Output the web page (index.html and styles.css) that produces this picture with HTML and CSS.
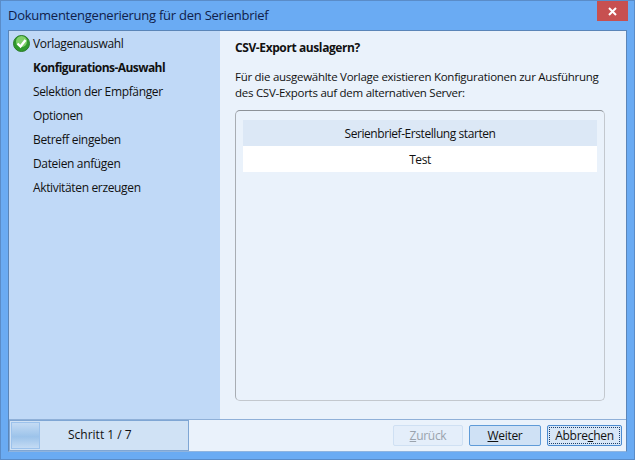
FILE: index.html
```html
<!DOCTYPE html>
<html lang="de">
<head>
	<meta charset="utf-8">
	<title>Dokumentengenerierung für den Serienbrief</title>
	<link rel="stylesheet" href="styles.css">
</head>
<body>
	<div class="window">
		<div class="titlebar">
			<span class="title">Dokumentengenerierung für den Serienbrief</span>
			<div class="close">
				<svg width="9" height="9" viewBox="0 0 9 9"><path d="M1 1l7 7M8 1l-7 7" stroke="#fff" stroke-width="2" fill="none"/></svg>
			</div>
		</div>
		<div class="client">
			<div class="main">
				<ul class="steps">
					<li class="step">
						<svg class="check" width="17" height="17" viewBox="0 0 17 17">
							<circle cx="8.5" cy="8.5" r="8" fill="#2f9a2c" stroke="#2c7a2a"/>
							<circle cx="8.5" cy="6.5" r="5.5" fill="#7fd06a"/>
							<path d="M4.5 8.5l3 3 5-6.5" stroke="#fff" stroke-width="2.4" fill="none"/>
						</svg>
						Vorlagenauswahl
					</li>
					<li class="step current">Konfigurations-Auswahl</li>
					<li class="step">Selektion der Empfänger</li>
					<li class="step">Optionen</li>
					<li class="step">Betreff eingeben</li>
					<li class="step">Dateien anfügen</li>
					<li class="step">Aktivitäten erzeugen</li>
				</ul>
				<div class="content">
					<h1>CSV-Export auslagern?</h1>
					<p>Für die ausgewählte Vorlage existieren Konfigurationen zur Ausführung<br>des CSV-Exports auf dem alternativen Server:</p>
					<div class="listbox">
						<div class="row head">Serienbrief-Erstellung starten</div>
						<div class="row">Test</div>
					</div>
				</div>
			</div>
			<div class="footer">
				<div class="progress">
					<div class="bar"></div>
					<span class="progress-text">Schritt 1 / 7</span>
				</div>
				<div class="buttons">
					<div class="btn disabled"><u>Z</u>urück</div>
					<div class="btn hot"><u>W</u>eiter</div>
					<div class="btn focus">Abbre<u>c</u>hen</div>
				</div>
			</div>
		</div>
	</div>
</body>
</html>
```

FILE: styles.css
```css
html, body {
	margin: 0;
	padding: 0;
}

body {
	width: 635px;
	height: 460px;
	overflow: hidden;
	font-family: "Open Sans", "Noto Sans", sans-serif;
	font-size: 12px;
	color: #111;
}

.window {
	box-sizing: border-box;
	width: 635px;
	height: 460px;
	background: #6aabf3;
	border: 1px solid #5a8cc8;
	padding: 0 7px 7px;
	display: flex;
	flex-direction: column;
}

.titlebar {
	height: 29px;
	display: flex;
	justify-content: space-between;
}

.title {
	font-size: 13px;
	letter-spacing: -0.25px;
	line-height: 28px;
	color: #10204a;
}

.close {
	width: 31px;
	height: 20px;
	margin-right: -1px;
	background: #c75050;
	display: flex;
	align-items: center;
	justify-content: center;
}

.client {
	flex: 1;
	display: flex;
	flex-direction: column;
	background: #eaf2fb;
	border: 1px solid #5a85b8;
	border-bottom-color: #8fb4df;
}

.main {
	flex: 1;
	display: flex;
}

.steps {
	flex: none;
	list-style: none;
	margin: 0;
	padding: 0;
	width: 211px;
	background: #c0d9f7;
	letter-spacing: -0.35px;
}

.step {
	height: 24px;
	line-height: 26px;
	padding-left: 24px;
	position: relative;
}

.current {
	font-weight: bold;
	letter-spacing: -0.55px;
}

.check {
	position: absolute;
	left: 4px;
	top: 4px;
}

.content {
	flex: 1;
	min-width: 0;
	padding: 0 21px 18px 15px;
	display: flex;
	flex-direction: column;
}

h1 {
	margin: 8px 0 0 0;
	font-size: 12px;
	letter-spacing: -0.4px;
	line-height: 18px;
	font-weight: bold;
}

p {
	margin: 12px 0 0 0;
	font-size: 11.5px;
	line-height: 16px;
	white-space: nowrap;
	letter-spacing: -0.27px;
}

.listbox {
	flex: 1;
	margin-top: 9px;
	padding: 9px 7px;
	border: 1px solid #c3c8ce;
	border-top-color: #8d9298;
	border-left-color: #a8adb3;
	border-radius: 5px;
}

.row {
	height: 26px;
	line-height: 27px;
	text-align: center;
	background: #fff;
	letter-spacing: -0.43px;
}

.head {
	background: #dce8f6;
}

.footer {
	height: 31px;
	border-top: 1px solid #8fb0d8;
	display: flex;
	justify-content: space-between;
}

.progress {
	box-sizing: border-box;
	width: 180px;
	background: #d0e2f5;
	border: 1px solid #7fa6d4;
	padding: 1px;
	display: flex;
}

.bar {
	width: 29px;
	box-sizing: border-box;
	border: 1px solid #9cc2ec;
	background: linear-gradient(#c4dbf4, #9cc3ea 55%, #c4dbf4);
}

.progress-text {
	margin-left: 28px;
	line-height: 26px;
}

.buttons {
	display: flex;
	gap: 6px;
	padding: 5px 4px 0 0;
	letter-spacing: -0.3px;
}

.btn {
	box-sizing: border-box;
	height: 21px;
	width: 70px;
	line-height: 19px;
	text-align: center;
	border: 1px solid #7fa6d4;
	border-radius: 2px;
	background: #cfe1f5;
}

.disabled {
	color: #9aa3ad;
	background: #e4eefa;
	border-color: #cfe0f3;
}

.hot {
	width: 72px;
	border-color: #5f9bd8;
}

.focus {
	width: 75px;
	border-color: #4b8bd0;
	background: #d8e7f7;
	outline: 1px dotted #1c3e6a;
	outline-offset: -3px;
}
```
